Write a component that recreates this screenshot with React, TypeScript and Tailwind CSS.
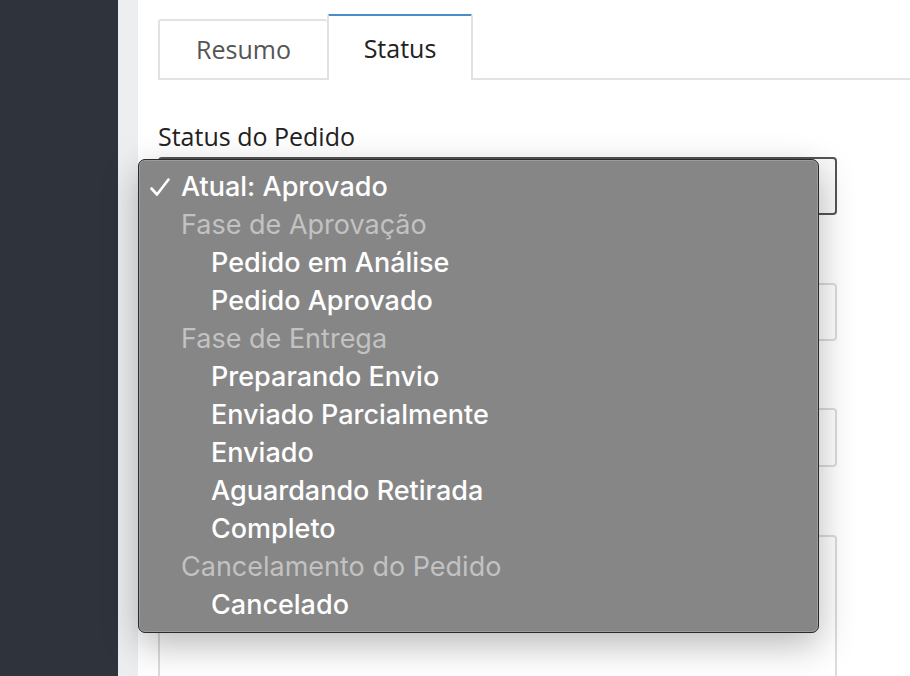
import React from "react";

type Row = { label: string; kind: "current" | "group" | "option" };

const rows: Row[] = [
  { label: "Atual: Aprovado", kind: "current" },
  { label: "Fase de Aprovação", kind: "group" },
  { label: "Pedido em Análise", kind: "option" },
  { label: "Pedido Aprovado", kind: "option" },
  { label: "Fase de Entrega", kind: "group" },
  { label: "Preparando Envio", kind: "option" },
  { label: "Enviado Parcialmente", kind: "option" },
  { label: "Enviado", kind: "option" },
  { label: "Aguardando Retirada", kind: "option" },
  { label: "Completo", kind: "option" },
  { label: "Cancelamento do Pedido", kind: "group" },
  { label: "Cancelado", kind: "option" },
];

function Check() {
  return (
    <svg width="20" height="18" viewBox="0 0 20 18" fill="none" className="mt-[2px]">
      <path d="M1.5 10.5 L7 16.5 L18.5 1.5" stroke="white" strokeWidth="2.6" strokeLinecap="round" strokeLinejoin="round" />
    </svg>
  );
}

export default function App() {
  return (
    <div className="flex h-[676px] w-[910px] overflow-hidden bg-white font-['Open_Sans',sans-serif]">
      {/* Sidebar */}
      <aside className="w-[118px] shrink-0 bg-[#2f343c]" />
      <div className="w-[20px] shrink-0 bg-[#eceef0]" />

      {/* Content */}
      <main className="relative flex-1 bg-white pl-[20px]">
        {/* Tabs */}
        <div className="mt-[14px] flex items-end border-b-2 border-[#e2e2e2]">
          <div className="-mb-[2px] flex h-[61px] w-[169px] items-center justify-center rounded-t-[3px] border-2 border-b-2 border-r-0 border-[#e2e2e2] pt-[1px] text-[25px] text-[#555]">
            Resumo
          </div>
          <div className="-mb-[2px] flex h-[66px] w-[146px] items-center justify-center rounded-t-[3px] border-2 border-b-0 border-[#e2e2e2] border-t-[#4a8ccc] bg-white pt-[2px] text-[25px] text-[#222]">
            Status
          </div>
        </div>

        {/* Form (lower fields sit under the open menu) */}
        <div className="mt-[39px] flex w-[679px] flex-col">
          <label className="text-[25px] leading-[34px] text-[#222]">Status do Pedido</label>
          <div className="mt-[4px] h-[58px] rounded-[4px] border-2 border-[#555] bg-[#fafafa]" />
          <div className="mt-[68px] h-[58px] rounded-[4px] border-2 border-[#dcdcdc] bg-white" />
          <div className="mt-[67px] h-[59px] rounded-[4px] border-2 border-[#dcdcdc] bg-white" />
          <div className="mt-[68px] h-[200px] rounded-[4px] border-2 border-[#dcdcdc] bg-white" />
        </div>

        {/* Native select popup */}
        <div className="absolute left-0 top-[159px] w-[681px] rounded-[7px] border border-[#2a2a2a] bg-[#868686] pt-[7px] pb-[9px] font-['Inter',sans-serif] shadow-[0_12px_36px_rgba(0,0,0,0.28)] ring-1 ring-inset ring-[#9c9c9c]">
          {rows.map((r) => (
            <div key={r.label} className="flex h-[38px] items-center text-[27px] font-medium leading-none">
              <span className="flex w-[42px] shrink-0 pl-[11px]">
                {r.kind === "current" ? <Check /> : null}
              </span>
              <span
                className={
                  r.kind === "group"
                    ? "font-normal text-[#c2c2c2]"
                    : r.kind === "option"
                      ? "pl-[30px] text-white"
                      : "text-white"
                }
              >
                {r.label}
              </span>
            </div>
          ))}
        </div>
      </main>
    </div>
  );
}
